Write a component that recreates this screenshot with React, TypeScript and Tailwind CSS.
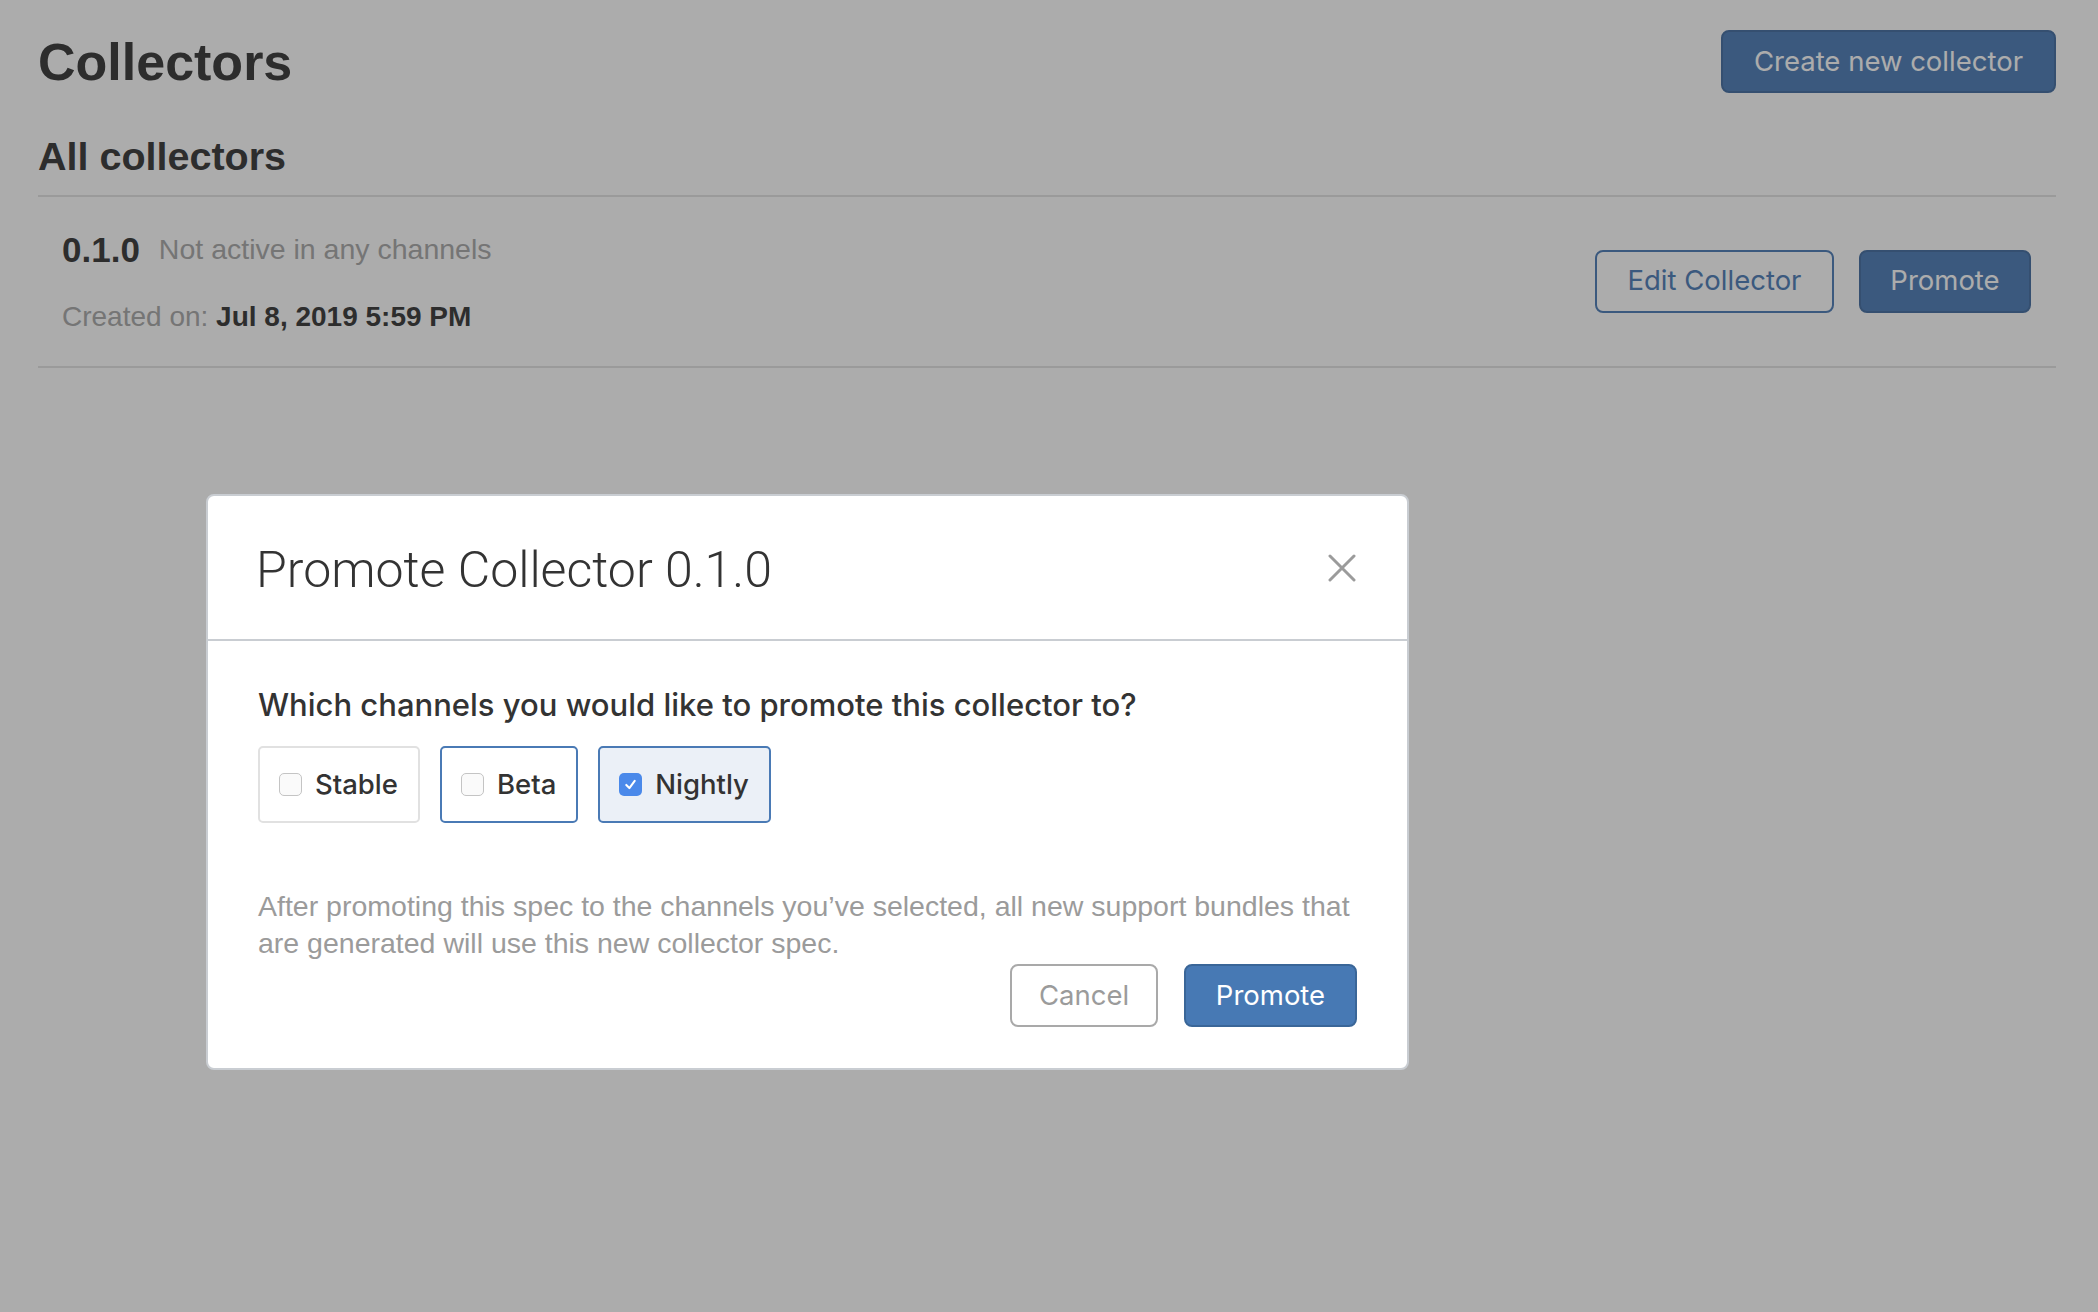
import React from "react";

const sans = "font-['Helvetica_Neue','Liberation_Sans',Arial,sans-serif]";
const ui = "font-['Inter','Helvetica_Neue','Liberation_Sans',sans-serif]";

function Checkbox({ checked }: { checked: boolean }) {
  if (checked) {
    return (
      <span className="flex h-[23px] w-[23px] items-center justify-center rounded-[5px] bg-[#4a89ea]">
        <svg width="15" height="15" viewBox="0 0 16 16" fill="none">
          <path d="M3.5 8.5 L6.8 11.8 L12.5 4.2" stroke="white" strokeWidth="2.2" strokeLinecap="round" strokeLinejoin="round" />
        </svg>
      </span>
    );
  }
  return <span className="h-[23px] w-[23px] rounded-[5px] border-[1.5px] border-[#c4c4c4] bg-[#fafafa]" />;
}

function Channel({ label, checked, active }: { label: string; checked: boolean; active: boolean }) {
  const box = checked
    ? "border-[#4a7ab5] bg-[#ebf0f7]"
    : active
    ? "border-[#4a7ab5] bg-white"
    : "border-[#e1e1e1] bg-white";
  return (
    <label className={`flex h-[77px] items-center gap-[13px] rounded-[5px] border-2 pl-[19px] pr-[20px] ${box}`}>
      <Checkbox checked={checked} />
      <span className={`${ui} text-[27.5px] font-medium leading-none text-[#333333]`}>{label}</span>
    </label>
  );
}

export default function App() {
  return (
    <div className={`relative min-h-screen w-full bg-white ${sans}`}>
      <div className="pl-[38px] pr-[42px] pt-[30px]">
        <div className="flex items-center justify-between">
          <h1 className="text-[52px] font-bold leading-none text-[#333333]">Collectors</h1>
          <button className={`${ui} h-[63px] rounded-[8px] border-2 border-[#3f6a9f] bg-[#4a7ab5] px-[31px] text-[27.5px] text-white`}>
            Create new collector
          </button>
        </div>
        <h2 className="mt-[44px] border-b-2 border-[#e3e3e3] pb-[18px] text-[39.5px] font-bold leading-none text-[#333333]">
          All collectors
        </h2>
        <div className="flex items-center justify-between border-b-2 border-[#e3e3e3] py-[35px] pl-[24px] pr-[25px]">
          <div className="flex flex-col">
            <div className="flex items-start gap-[19px]">
              <span className="text-[35px] font-bold leading-none text-[#333333]">0.1.0</span>
              <span className="mt-[3px] text-[28.5px] leading-none text-[#a6a6a6]">Not active in any channels</span>
            </div>
            <div className="mt-[36px] text-[28px] leading-none text-[#a6a6a6]">
              Created on: <span className="font-bold text-[#333333]">Jul 8, 2019 5:59 PM</span>
            </div>
          </div>
          <div className="flex items-center gap-[25px]">
            <button className={`${ui} h-[63px] w-[239px] rounded-[8px] border-2 border-[#4a7ab5] bg-white text-[27.5px] text-[#4a7ab5]`}>
              Edit Collector
            </button>
            <button className={`${ui} h-[63px] w-[172px] rounded-[8px] border-2 border-[#3f6a9f] bg-[#4a7ab5] text-[27.5px] text-white`}>
              Promote
            </button>
          </div>
        </div>
      </div>

      <div className="fixed inset-0 bg-[rgba(37,37,37,0.38)]" />

      <div className="absolute left-[206px] top-[494px] w-[1203px] rounded-[8px] border-2 border-[#c9cdd2] bg-white">
        <div className="flex h-[145px] items-center justify-between border-b-2 border-[#c9cdd2] pl-[48px] pr-[50px]">
          <h3 className="mt-[4px] font-['Roboto','Helvetica_Neue',sans-serif] text-[50px] font-light leading-none text-[#333333]">
            Promote Collector 0.1.0
          </h3>
          <button className="flex h-[30px] w-[30px] items-center justify-center">
            <svg width="28" height="28" viewBox="0 0 28 28" fill="none">
              <path d="M2 2 L26 26 M26 2 L2 26" stroke="#9b9b9b" strokeWidth="3" strokeLinecap="round" />
            </svg>
          </button>
        </div>
        <div className="px-[50px] pb-[41px] pt-[48px]">
          <p className={`${ui} text-[31px] font-medium leading-none text-[#333333]`}>
            Which channels you would like to promote this collector to?
          </p>
          <div className="mt-[26px] flex gap-[20px]">
            <Channel label="Stable" checked={false} active={false} />
            <Channel label="Beta" checked={false} active={true} />
            <Channel label="Nightly" checked={true} active={true} />
          </div>
          <p className="mt-[65px] text-[28.5px] leading-[37px] text-[#9b9b9b]">
            After promoting this spec to the channels you’ve selected, all new support bundles that are generated will use this new collector spec.
          </p>
          <div className="mt-[2px] flex justify-end gap-[26px]">
            <button className={`${ui} h-[63px] w-[148px] rounded-[8px] border-2 border-[#a9a9a9] bg-white text-[27.5px] text-[#9b9b9b]`}>
              Cancel
            </button>
            <button className={`${ui} h-[63px] w-[173px] rounded-[8px] border-2 border-[#3a6698] bg-[#4779b4] text-[27.5px] text-white`}>
              Promote
            </button>
          </div>
        </div>
      </div>
    </div>
  );
}
